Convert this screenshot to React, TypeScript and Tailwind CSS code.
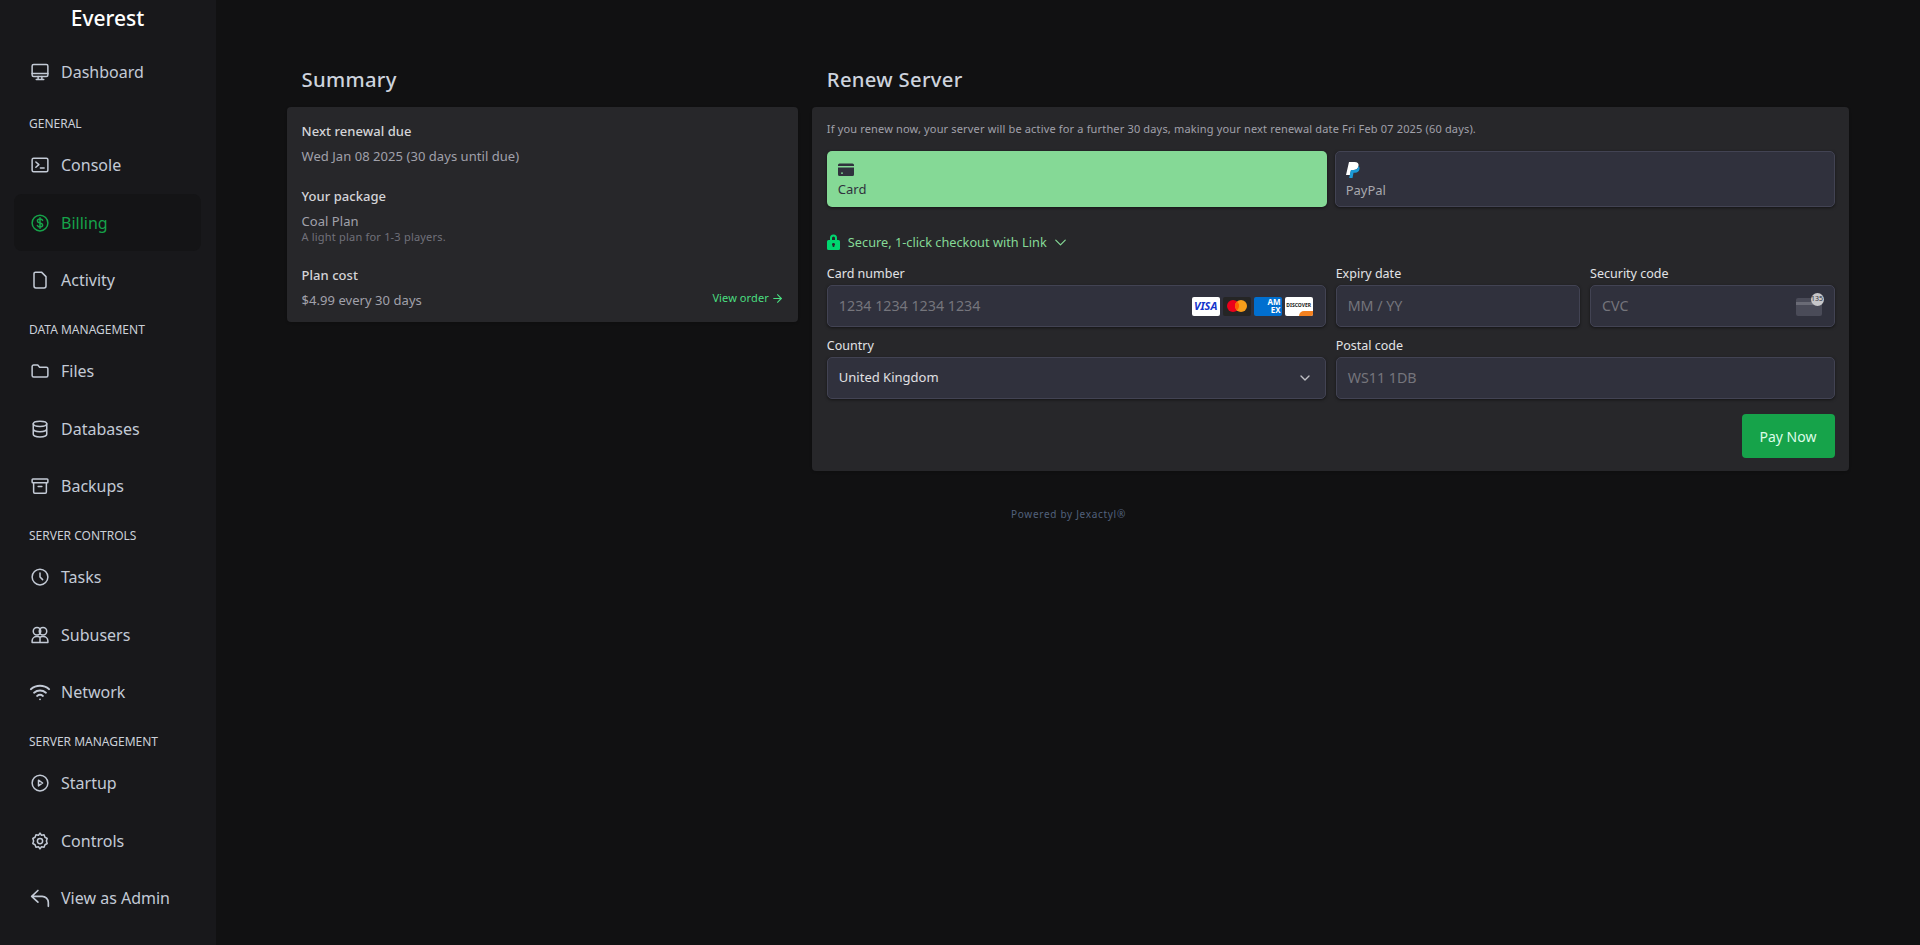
import { ChevronDown, ArrowRight } from "lucide-react";
import type { ReactNode } from "react";

const Ico = ({ children, w = 18 }: { children: ReactNode; w?: number }) => (
  <svg
    width={w}
    height={w}
    viewBox="0 0 24 24"
    fill="none"
    stroke="currentColor"
    strokeWidth="2"
    strokeLinecap="round"
    strokeLinejoin="round"
    className="shrink-0"
  >
    {children}
  </svg>
);

const icons: Record<string, ReactNode> = {
  Dashboard: (
    <Ico>
      <rect x="1.5" y="2" width="21" height="16" rx="2" />
      <path d="M1.5 14h21M9.5 18v3.5M14.5 18v3.5M7 22h10" />
    </Ico>
  ),
  Console: (
    <Ico>
      <rect x="1.5" y="3" width="21" height="18" rx="2" />
      <path d="M6.5 8l4 3.5-4 3.5M12.5 16h5" />
    </Ico>
  ),
  Billing: (
    <Ico>
      <circle cx="12" cy="12" r="10.5" />
      <path d="M15.5 8.5c-.5-1.2-1.8-1.8-3.5-1.8-2 0-3.5 1-3.5 2.600 0 3.500 7 1.900 7 5.400 0 1.600-1.500 2.600-3.500 2.600-1.700 0-3-.7-3.500-1.900M12 5v14" />
    </Ico>
  ),
  Activity: (
    <Ico>
      <path d="M6 1.5h8l6 6V20a2.5 2.5 0 0 1-2.500 2.500h-11A2.500 2.500 0 0 1 4 20V3.500a2 2 0 0 1 2-2z" />
    </Ico>
  ),
  Files: (
    <Ico>
      <path d="M1.5 6a2 2 0 0 1 2-2h5.500l2.500 3h9a2 2 0 0 1 2 2v9a2 2 0 0 1-2 2h-17a2 2 0 0 1-2-2z" />
    </Ico>
  ),
  Databases: (
    <Ico>
      <ellipse cx="12" cy="5" rx="9" ry="3.5" />
      <path d="M3 5v14c0 1.900 4 3.500 9 3.500s9-1.600 9-3.500V5M3 12c0 1.900 4 3.500 9 3.500s9-1.600 9-3.500" />
    </Ico>
  ),
  Backups: (
    <Ico>
      <rect x="1.5" y="2.5" width="21" height="5" rx="1" />
      <path d="M3.5 7.5V20a1.5 1.5 0 0 0 1.500 1.500h14a1.500 1.500 0 0 0 1.500-1.500V7.500M9.500 12.500h5" />
    </Ico>
  ),
  Tasks: (
    <Ico>
      <circle cx="12" cy="12" r="10.5" />
      <path d="M12 6.5V12l3.500 3.500" />
    </Ico>
  ),
  Subusers: (
    <Ico>
      <circle cx="8" cy="7" r="5" />
      <circle cx="16" cy="7" r="5" />
      <path d="M1.5 22v-2.500A6 6 0 0 1 7.500 14h1.500a5 5 0 0 1 3 1 5 5 0 0 1 3-1h1.500a6 6 0 0 1 6 5.500V22zM12 15v7" />
    </Ico>
  ),
  Network: (
    <Ico w={22}>
      <path d="M2 9a15 15 0 0 1 20 0M5.500 12.800a10 10 0 0 1 13 0M8.800 16.300a5.200 5.200 0 0 1 6.400 0M12 20h.01" />
    </Ico>
  ),
  Startup: (
    <Ico>
      <circle cx="12" cy="12" r="10.5" />
      <path d="M10 8.200l5.500 3.800-5.500 3.800z" />
    </Ico>
  ),
  Controls: (
    <Ico>
      <path d="M12 1.500l2 2.800 3.400-.5 1.200 3.200 3 1.700-1.100 3.300 1.100 3.300-3 1.700-1.200 3.200-3.400-.5-2 2.800-2-2.800-3.400.5-1.200-3.200-3-1.700 1.100-3.300-1.100-3.300 3-1.700 1.200-3.200 3.400.5z" />
      <circle cx="12" cy="12" r="3.5" />
    </Ico>
  ),
  "View as Admin": (
    <Ico w={20}>
      <path d="M9.5 3L2 10l7.500 7M2 10h12.500a7.500 7.500 0 0 1 7.500 7.500V22" />
    </Ico>
  ),
};
icons.Settings = icons.Controls;

function NavItem({ label, active }: { label: string; active?: boolean }) {
  return (
    <a
      className={
        active
          ? "mx-[14px] flex h-[57.5px] w-[187px] items-center gap-3 rounded-lg bg-[#141416] pl-[17px] text-[#16a34a]"
          : "mx-[14px] flex h-[57.5px] w-[187px] items-center gap-3 rounded-lg pl-[17px] text-[#c3cad6]"
      }
    >
      <span className="flex w-[18px] shrink-0 justify-center">{icons[label]}</span>
      <span className="whitespace-nowrap text-[16px]">{label}</span>
    </a>
  );
}

function Section({ title }: { title: string }) {
  return (
    <div className="h-[33.5px] pl-[29px] pt-[14.5px] text-[12px] leading-[14px] text-[#cbd0d9]">
      {title}
    </div>
  );
}

function Sidebar() {
  return (
    <aside className="h-[945px] w-[216px] shrink-0 overflow-hidden bg-[#18181b] font-['Noto_Sans',sans-serif]">
      <div className="flex h-[43.25px] w-[215px] justify-center pt-[3px] text-[21px] font-medium leading-[30px] text-white">
        Everest
      </div>
      <NavItem label="Dashboard" />
      <div className="pt-[2px]">
        <Section title="GENERAL" />
      </div>
      <NavItem label="Console" />
      <NavItem label="Billing" active />
      <NavItem label="Activity" />
      <Section title="DATA MANAGEMENT" />
      <NavItem label="Files" />
      <NavItem label="Databases" />
      <NavItem label="Backups" />
      <Section title="SERVER CONTROLS" />
      <NavItem label="Tasks" />
      <NavItem label="Subusers" />
      <NavItem label="Network" />
      <Section title="SERVER MANAGEMENT" />
      <NavItem label="Startup" />
      <NavItem label="Controls" />
      <NavItem label="View as Admin" />
      <NavItem label="Settings" />
    </aside>
  );
}

function SummaryCard() {
  return (
    <div className="h-[215px] rounded bg-[#27272a] px-[14.5px] pt-[14px] text-[13px] leading-5 tracking-[0.05px] shadow">
      <h3 className="font-medium text-[#d4d4d8]">Next renewal due</h3>
      <p className="mt-[5px] text-[#a1a1aa]">Wed Jan 08 2025 (30 days until due)</p>
      <h3 className="mt-[20px] font-medium text-[#d4d4d8]">Your package</h3>
      <p className="mt-[5px] text-[#a1a1aa]">Coal Plan</p>
      <p className="mt-[-2px] text-[11px] leading-4 tracking-[0.2px] text-[#71717a]">
        A light plan for 1-3 players.
      </p>
      <h3 className="mt-[20px] font-medium text-[#d4d4d8]">Plan cost</h3>
      <div className="mt-[5px] flex items-start justify-between">
        <p className="text-[#a1a1aa]">$4.99 every 30 days</p>
        <a className="mt-[-2px] flex items-center gap-[2px] text-[11px] tracking-[0.1px] text-[#4ade80]">
          View order <ArrowRight size={13} />
        </a>
      </div>
    </div>
  );
}

function CardLogos() {
  return (
    <div className="flex items-center gap-[3px]">
      <span className="flex h-[19px] w-[28px] items-center justify-center rounded-[2px] bg-white text-[11px] font-bold italic text-[#1434cb]">
        VISA
      </span>
      <span className="flex h-[19px] w-[28px] items-center justify-center rounded-[2px] bg-[#252525]">
        <svg width="20" height="12" viewBox="0 0 20 12">
          <circle cx="6" cy="6" r="6" fill="#eb001b" />
          <circle cx="14" cy="6" r="6" fill="#f79e1b" />
          <path d="M10 1.5a6 6 0 0 1 0 9 6 6 0 0 1 0-9z" fill="#ff5f00" />
        </svg>
      </span>
      <span className="flex h-[19px] w-[28px] flex-col items-end justify-center rounded-[2px] bg-[#016fd0] pr-[1px] text-[8px] font-bold leading-[8px] text-white">
        <span>AM</span>
        <span>EX</span>
      </span>
      <span className="relative flex h-[19px] w-[28px] items-center justify-center overflow-hidden rounded-[2px] bg-white text-[5px] font-bold text-[#1a1a1a]">
        DISCOVER
        <span className="absolute bottom-0 right-0 h-[5px] w-[14px] rounded-tl-[10px] bg-[#f48120]" />
      </span>
    </div>
  );
}

function Field({ label, children }: { label: string; children: ReactNode }) {
  return (
    <label className="block">
      <div className="mb-[1px] text-[12.5px] leading-5 text-[#e2e3e6]">{label}</div>
      <div className="flex h-[42px] items-center justify-between rounded-[5px] border border-[#424353] bg-[#30313d] pl-[11px] pr-[12px] text-[14.25px] text-[#75757c] shadow-[0_1px_3px_rgba(0,0,0,0.5)]">
        {children}
      </div>
    </label>
  );
}

function PaymentForm() {
  return (
    <div className="h-[364px] rounded bg-[#27272a] px-[14.5px] pt-[12px] shadow">
      <p className="text-[11px] leading-5 tracking-[0.16px] text-[#a1a1aa]">
        If you renew now, your server will be active for a further 30 days, making your next renewal
        date Fri Feb 07 2025 (60 days).
      </p>
      <div className="mt-[12px] grid grid-cols-2 gap-2">
        <div className="flex h-[56px] flex-col rounded-[5px] bg-[#85d996] pl-[11px] pt-[12px] text-[#30313d] shadow-[0_1px_3px_rgba(0,0,0,0.5)]">
          <svg width="16" height="14" viewBox="0 0 16 14" fill="currentColor">
            <path d="M1.5 0.5h13A1.5 1.5 0 0 1 16 2v1H0V2A1.5 1.5 0 0 1 1.5 0.5zM0 4.5h16V11.5a1.5 1.5 0 0 1-1.500 1.500h-13A1.500 1.500 0 0 1 0 11.500zM3 9.500v1.200h2V9.500z" />
          </svg>
          <span className="mt-[2px] text-[13px] leading-5">Card</span>
        </div>
        <div className="flex h-[56px] flex-col rounded-[5px] border border-[#424353] bg-[#30313d] pl-[10px] pt-[10px] text-[#a8a8ae] shadow-[0_1px_3px_rgba(0,0,0,0.5)]">
          <svg width="14" height="16" viewBox="0 0 14 16">
            <path d="M3 0h5.500C11.500 0 13 1.500 12.500 4c-.5 2.800-2.500 4-5 4H5L4 13H0z" fill="#ffffff" />
            <path d="M5 8h2.500c2.500 0 4.500-1.200 5-4 .8.700 1.200 1.800 1 3-.5 2.500-2 3.800-4.500 3.800H7.500L6.500 16H3.200l1-5z" fill="#1c9ad6" />
          </svg>
          <span className="mt-[2px] text-[13px] leading-5">PayPal</span>
        </div>
      </div>
      <div className="mt-[25px] flex items-center text-[12.75px] leading-5 text-[#85d996]">
        <svg width="13" height="16" viewBox="0 0 13 16" fill="#00d66f" className="mr-[8px]">
          <path d="M3 6V4a3.500 3.500 0 0 1 7 0v2h1.500A1.500 1.500 0 0 1 13 7.500v7a1.500 1.500 0 0 1-1.500 1.500h-10A1.500 1.500 0 0 1 0 14.500v-7A1.500 1.500 0 0 1 1.500 6zM5 6h3V4a1.500 1.500 0 0 0-3 0zM6.500 9a1.500 1.500 0 0 0-.8 2.800V13h1.600v-1.200A1.500 1.500 0 0 0 6.500 9z" />
        </svg>
        Secure, 1-click checkout with Link
        <ChevronDown size={19} strokeWidth={1.5} className="ml-[4px]" />
      </div>
      <div className="mt-[12px] grid grid-cols-2 gap-x-[10px] gap-y-[9px]">
        <Field label="Card number">
          <span>1234 1234 1234 1234</span>
          <CardLogos />
        </Field>
        <div className="grid grid-cols-2 gap-[10px]">
          <Field label="Expiry date">
            <span>MM / YY</span>
          </Field>
          <Field label="Security code">
            <span>CVC</span>
            <span className="relative mt-[2px] h-[18px] w-[26px] rounded-[2px] bg-[#4a4b58]">
              <span className="absolute left-0 top-[4px] h-[3px] w-full bg-[#6a6b76]" />
              <span className="absolute right-[-2px] top-[-5px] flex h-[13px] w-[13px] items-center justify-center rounded-full bg-[#c6c6c9] text-[7px] text-[#30313d]">
                135
              </span>
            </span>
          </Field>
        </div>
        <Field label="Country">
          <span className="text-[13px] text-[#e0e0e3]">United Kingdom</span>
          <ChevronDown size={16} className="text-[#c0c0c5]" />
        </Field>
        <Field label="Postal code">
          <span>WS11 1DB</span>
        </Field>
      </div>
      <div className="mt-[15px] flex justify-end">
        <button className="h-[44px] w-[93px] rounded bg-[#16a34a] text-[14px] text-[#dcfce7]">
          Pay Now
        </button>
      </div>
    </div>
  );
}

export default function App() {
  return (
    <div className="flex h-[945px] overflow-hidden bg-[#111112] font-['Noto_Sans',sans-serif]">
      <Sidebar />
      <main className="flex-1 px-[71px] pt-[62px]">
        <div className="grid grid-cols-3 gap-x-[14px]">
          <div>
            <h2 className="h-[45px] pl-[14.5px] text-[20.25px] font-medium leading-[34px] tracking-[0.3px] text-[#cdd3dd]">
              Summary
            </h2>
            <SummaryCard />
          </div>
          <div className="col-span-2">
            <h2 className="h-[45px] pl-[14.5px] text-[20.25px] font-medium leading-[34px] tracking-[0.3px] text-[#cdd3dd]">
              Renew Server
            </h2>
            <PaymentForm />
          </div>
        </div>
        <p className="mt-[33px] pl-[1px] text-center text-[10px] leading-5 tracking-[0.7px] text-[#52617c]">
          Powered by Jexactyl®
        </p>
      </main>
    </div>
  );
}
